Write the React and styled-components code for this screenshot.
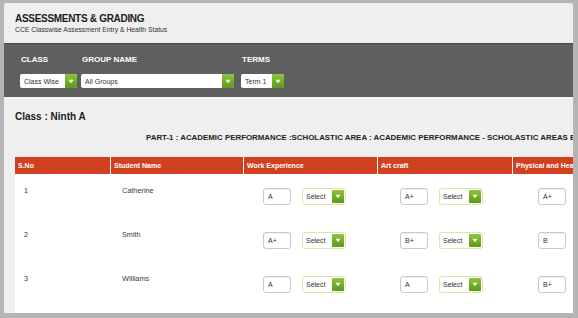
import React from "react";
import styled, { createGlobalStyle } from "styled-components";

const GlobalStyle = createGlobalStyle`
  html, body {
    margin: 0;
    padding: 0;
    background: #b5b5b5;
    font-family: "Liberation Sans", Arial, sans-serif;
  }
`;

const columns = "96px 133px 134px 135px 134px";

const students = [
  { no: 1, name: "Catherine", work: "A", art: "A+", health: "A+" },
  { no: 2, name: "Smith", work: "A+", art: "B+", health: "B" },
  { no: 3, name: "Williams", work: "A", art: "A", health: "B+" },
];

function Arrow() {
  return (
    <svg width="6" height="5" viewBox="0 0 6 5">
      <path d="M0.5 0.8 L5.5 0.8 L3 4.3 Z" fill="#fff" />
    </svg>
  );
}

function Dropdown({ value, width }) {
  return (
    <DropBox style={{ width }}>
      <span>{value}</span>
      <DropButton>
        <Arrow />
      </DropButton>
    </DropBox>
  );
}

function GradeSelect() {
  return (
    <SelectBox>
      <span>Select</span>
      <SelectButton>
        <Arrow />
      </SelectButton>
    </SelectBox>
  );
}

function App() {
  return (
    <Frame>
      <GlobalStyle />
      <Window>
        <Header>
          <Title>ASSESSMENTS &amp; GRADING</Title>
          <SubTitle>CCE Classwise Assessment Entry &amp; Health Status</SubTitle>
        </Header>
        <Toolbar>
          <Field>
            <Label>CLASS</Label>
            <Dropdown value="Class Wise" width={57} />
          </Field>
          <Field $gap={7}>
            <Label>GROUP NAME</Label>
            <Dropdown value="All Groups" width={153} />
          </Field>
          <Field>
            <Label>TERMS</Label>
            <Dropdown value="Term 1" width={43} />
          </Field>
        </Toolbar>
        <Content>
          <ClassName>Class : Ninth A</ClassName>
          <PartTitle>
            PART-1 : ACADEMIC PERFORMANCE :SCHOLASTIC AREA : ACADEMIC PERFORMANCE - SCHOLASTIC AREAS BASED
          </PartTitle>
          <Table>
            <HeadRow>
              <HeadCell>S.No</HeadCell>
              <HeadCell>Student Name</HeadCell>
              <HeadCell>Work Experience</HeadCell>
              <HeadCell>Art craft</HeadCell>
              <HeadCell>Physical and Health</HeadCell>
            </HeadRow>
            {students.map((s) => (
              <Row key={s.no}>
                <TextCell $indent={9}>{s.no}</TextCell>
                <TextCell $indent={11}>{s.name}</TextCell>
                <GradeCell $indent={19}>
                  <GradeInput>{s.work}</GradeInput>
                  <GradeSelect />
                </GradeCell>
                <GradeCell $indent={22}>
                  <GradeInput>{s.art}</GradeInput>
                  <GradeSelect />
                </GradeCell>
                <GradeCell $indent={25}>
                  <GradeInput>{s.health}</GradeInput>
                </GradeCell>
              </Row>
            ))}
          </Table>
        </Content>
      </Window>
    </Frame>
  );
}

const Frame = styled.div`
  width: 578px;
  height: 318px;
  box-sizing: border-box;
  padding: 3px 5px 5px 4px;
  background: #b5b5b5;
`;

const Window = styled.div`
  height: 100%;
  background: #efefef;
  border-radius: 3px 3px 0 0;
  overflow: hidden;
  display: flex;
  flex-direction: column;
`;

const Header = styled.div`
  height: 40px;
  flex-shrink: 0;
  box-sizing: border-box;
  padding: 9px 11px 0;
  background: #efefef;
`;

const Title = styled.div`
  font-size: 10px;
  font-weight: bold;
  letter-spacing: -0.3px;
  color: #1c1c1c;
  line-height: 13px;
`;

const SubTitle = styled.div`
  font-size: 6.8px;
  color: #333;
  margin-top: 1px;
`;

const Toolbar = styled.div`
  height: 56px;
  flex-shrink: 0;
  box-sizing: border-box;
  background: #5f5f5f;
  border-top: 1px solid #4c4c4c;
  border-bottom: 2px solid #f7f7f7;
  display: flex;
  padding: 11px 0 0 16px;
`;

const Field = styled.div`
  display: flex;
  flex-direction: column;
  margin-right: ${(p) => p.$gap || 4}px;
`;

const Label = styled.div`
  color: #fff;
  font-size: 8px;
  font-weight: bold;
  height: 10px;
  line-height: 10px;
  padding-left: 1px;
  margin-bottom: 9px;
`;

const DropBox = styled.div`
  height: 14px;
  display: flex;
  align-items: center;
  justify-content: space-between;
  background: #fff;
  border-radius: 2px;
  overflow: hidden;
  font-size: 7px;
  color: #333;

  span {
    padding-left: 4px;
    white-space: nowrap;
  }
`;

const DropButton = styled.div`
  width: 12px;
  height: 14px;
  flex-shrink: 0;
  display: flex;
  align-items: center;
  justify-content: center;
  background: linear-gradient(#8fc43c, #5b9a17);
`;

const Content = styled.div`
  flex: 1;
  padding: 11px 0 0 11px;
  min-width: 0;
  display: flex;
  flex-direction: column;
`;

const ClassName = styled.div`
  font-size: 10px;
  font-weight: bold;
  color: #1c1c1c;
  line-height: 14px;
`;

const PartTitle = styled.div`
  margin: 8px 0 0 131px;
  font-size: 7.9px;
  font-weight: bold;
  color: #222;
  white-space: nowrap;
  line-height: 12px;
`;

const Table = styled.div`
  margin-top: 13px;
  flex: 1;
  background: #fff;
`;

const HeadRow = styled.div`
  display: grid;
  grid-template-columns: ${columns};
  height: 17px;
  background: #fff;
`;

const HeadCell = styled.div`
  background: #d1411f;
  color: #fff;
  font-size: 7px;
  font-weight: bold;
  line-height: 17px;
  padding-left: 3px;
  margin-right: 1px;
  white-space: nowrap;
  overflow: hidden;
`;

const Row = styled.div`
  display: grid;
  grid-template-columns: ${columns};
  height: 44px;
`;

const TextCell = styled.div`
  padding: 12px 0 0 ${(p) => p.$indent}px;
  font-size: 7.3px;
  color: #3a3a3a;
`;

const GradeCell = styled.div`
  padding: 14px 0 0 ${(p) => p.$indent}px;
  display: flex;
  align-items: flex-start;
  gap: 11px;
`;

const GradeInput = styled.div`
  width: 28px;
  height: 17px;
  box-sizing: border-box;
  border: 1px solid #c9c9c9;
  border-radius: 3px;
  font-size: 7px;
  color: #333;
  line-height: 15px;
  padding-left: 4px;
  box-shadow: inset 0 1px 1px rgba(0, 0, 0, 0.06);
`;

const SelectBox = styled.div`
  width: 44px;
  height: 17px;
  box-sizing: border-box;
  border: 1px solid #d6e9a8;
  border-radius: 3px;
  display: flex;
  align-items: center;
  justify-content: space-between;
  padding: 0 1px 0 3px;
  font-size: 7px;
  color: #333;
`;

const SelectButton = styled.div`
  width: 12px;
  height: 13px;
  border-radius: 1px;
  display: flex;
  align-items: center;
  justify-content: center;
  background: linear-gradient(#8fc43c, #5b9a17);
`;

export default App;
